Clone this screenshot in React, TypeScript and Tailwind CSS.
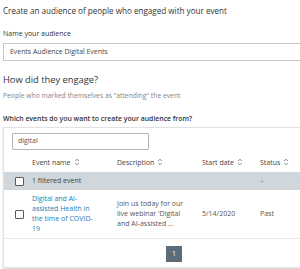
import React from "react";

const font = { fontFamily: '"Open Sans", "Noto Sans", sans-serif' };

function Sort() {
  return (
    <svg width="6" height="8" viewBox="0 0 6 8" className="inline-block ml-[3px] align-[-1px]" fill="none" stroke="#666" strokeWidth="0.8">
      <path d="M1.2 3 L3 1.2 L4.8 3" />
      <path d="M1.2 5 L3 6.8 L4.8 5" />
    </svg>
  );
}

function Box() {
  return <div className="w-[9px] h-[9px] border border-[#5a5a5a] rounded-[1px] bg-white" />;
}

const cols = "grid grid-cols-[28px_85px_85px_58px_1fr]";

export default function App() {
  return (
    <div className="w-[300px] h-[269px] overflow-hidden bg-white text-[#323130]" style={font}>
      <div className="pl-[3px]">
        <div className="h-[22px] flex items-center text-[8.1px] text-[#333]">Create an audience of people who engaged with your event</div>
        <div className="mt-[7px] h-[10px] flex items-center text-[7px] font-medium text-[#333]">Name your audience</div>
        <div className="mt-[4px] h-[18px] w-[310px] border border-[#c6c6c6] flex items-center pl-[6px] text-[6.9px] text-[#444]">
          Events Audience Digital Events
        </div>
        <div className="mt-[13px] h-[12px] flex items-center text-[9.3px] font-medium text-[#333]">How did they engage?</div>
        <div className="mt-[5px] h-[10px] flex items-center text-[6.75px] text-[#858585]">People who marked themselves as "attending" the event</div>
        <div className="mt-[13px] h-[10px] flex items-center text-[6.9px] font-semibold text-[#333]">Which events do you want to create your audience from?</div>
        <div className="mt-[3px] w-[310px] h-[141px] border border-[#e2e2e2] shadow-[0_1px_2px_rgba(0,0,0,0.18)] flex flex-col">
          <div className="pt-[5px] pb-[4px] pl-[8px]">
            <div className="w-[137px] h-[17px] border border-[#b5b5b5] rounded-[1px] flex items-center pl-[5px] text-[7px] text-[#555]">digital</div>
          </div>
          <div className={`${cols} h-[18px] items-center text-[7px] text-[#444]`}>
            <div />
            <div>Event name<Sort /></div>
            <div>Description<Sort /></div>
            <div>Start date<Sort /></div>
            <div>Status<Sort /></div>
          </div>
          <div className={`${cols} h-[18px] items-center bg-[#cfd6dc] text-[7px] text-[#444]`}>
            <div className="pl-[11px]"><Box /></div>
            <div className="font-medium">1 filtered event</div>
            <div />
            <div />
            <div className="pl-[1px]">-</div>
          </div>
          <div className={`${cols} h-[49px] items-center text-[7px] border-b border-[#e6e6e6]`}>
            <div className="pl-[11px]"><Box /></div>
            <div className="text-[#1f7db2] font-medium leading-[10px] w-[64px]">Digital and AI-assisted Health in the time of COVID-19</div>
            <div className="text-[#555] leading-[10px] pr-[8px]">Join us today for our live webinar 'Digital and AI-assisted ...</div>
            <div className="text-[#555]">5/14/2020</div>
            <div className="text-[#555]">Past</div>
          </div>
          <div className="flex-1 flex items-center pt-[2px] pl-[162px]">
            <div className="w-[16px] h-[16px] bg-[#5b6d7b] text-white text-[7px] flex items-center justify-center">1</div>
          </div>
        </div>
      </div>
    </div>
  );
}
